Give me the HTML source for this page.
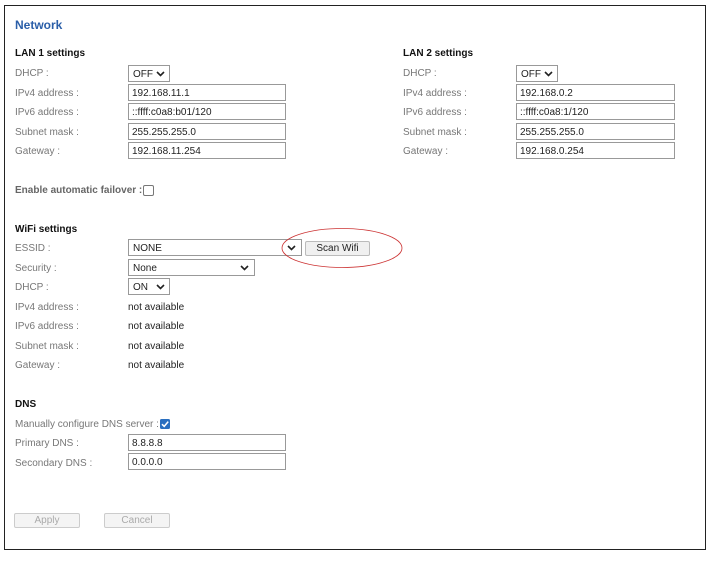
<!DOCTYPE html><html><head><style>
body{margin:0;width:710px;height:562px;background:#fff;font-family:"Liberation Sans",sans-serif;font-size:10px;color:#222;position:relative;overflow:hidden}
.a{position:absolute;white-space:nowrap}
.frame{position:absolute;left:4px;top:5px;width:700px;height:543px;border:1px solid #222}
.l{position:absolute;color:#777;line-height:12px;white-space:nowrap}
.h{position:absolute;font-weight:bold;color:#111;line-height:12px}
.in{position:absolute;border:1px solid #999;height:13px;padding-top:2px;line-height:13px;padding-left:3px;color:#222;background:#fff}
.sel{position:absolute;border:1px solid #999;height:13px;padding-top:2px;line-height:13px;padding-left:4px;background:#fff}
.chev{position:absolute;top:5px;width:9px;height:6px}
.v{position:absolute;line-height:12px;color:#222;white-space:nowrap}
.btn{position:absolute;border:1px solid #bbb;background:#f0f0f0;text-align:center;line-height:13px;border-radius:2px}
</style></head><body>
<div class="frame"></div>
<div class="a" style="left:15px;top:18px;font-weight:bold;font-size:12px;color:#2a5ea8">Network</div>
<div class="h" style="left:15px;top:48px">LAN 1 settings</div>
<div class="h" style="left:403px;top:48px">LAN 2 settings</div>
<svg width="0" height="0" style="position:absolute"><defs><symbol id="c" viewBox="0 0 9 6"><path d="M1 1L4.5 4.5L8 1" fill="none" stroke="#222" stroke-width="1.6"/></symbol></defs></svg>

<div class="l" style="left:15px;top:68px">DHCP :</div>
<div class="sel" style="left:128px;top:65px;width:36px">OFF<svg class="chev" style="left:27px"><use href="#c"/></svg></div>
<div class="l" style="left:15px;top:88px">IPv4 address :</div>
<div class="in" style="left:128px;top:84px;width:153px">192.168.11.1</div>
<div class="l" style="left:15px;top:107px">IPv6 address :</div>
<div class="in" style="left:128px;top:103px;width:153px">::ffff:c0a8:b01/120</div>
<div class="l" style="left:15px;top:127px">Subnet mask :</div>
<div class="in" style="left:128px;top:123px;width:153px">255.255.255.0</div>
<div class="l" style="left:15px;top:146px">Gateway :</div>
<div class="in" style="left:128px;top:142px;width:153px">192.168.11.254</div>

<div class="l" style="left:403px;top:68px">DHCP :</div>
<div class="sel" style="left:516px;top:65px;width:36px">OFF<svg class="chev" style="left:27px"><use href="#c"/></svg></div>
<div class="l" style="left:403px;top:88px">IPv4 address :</div>
<div class="in" style="left:516px;top:84px;width:154px">192.168.0.2</div>
<div class="l" style="left:403px;top:107px">IPv6 address :</div>
<div class="in" style="left:516px;top:103px;width:154px">::ffff:c0a8:1/120</div>
<div class="l" style="left:403px;top:127px">Subnet mask :</div>
<div class="in" style="left:516px;top:123px;width:154px">255.255.255.0</div>
<div class="l" style="left:403px;top:146px">Gateway :</div>
<div class="in" style="left:516px;top:142px;width:154px">192.168.0.254</div>

<div class="a" style="left:15px;top:185px;font-weight:bold;color:#666">Enable automatic failover :</div>
<div class="a" style="left:143px;top:185px;width:9px;height:9px;border:1px solid #777;border-radius:2px"></div>

<div class="h" style="left:15px;top:224px">WiFi settings</div>
<div class="l" style="left:15px;top:243px">ESSID :</div>
<div class="sel" style="left:128px;top:239px;width:168px">NONE<svg class="chev" style="left:158px"><use href="#c"/></svg></div>
<div class="btn" style="left:305px;top:241px;width:63px">Scan Wifi</div>
<svg class="a" style="left:280px;top:226px" width="124" height="44"><ellipse cx="62" cy="22" rx="60" ry="19.5" fill="none" stroke="#c33" stroke-width="0.8"/></svg>
<div class="l" style="left:15px;top:263px">Security :</div>
<div class="sel" style="left:128px;top:259px;width:121px">None<svg class="chev" style="left:111px"><use href="#c"/></svg></div>
<div class="l" style="left:15px;top:282px">DHCP :</div>
<div class="sel" style="left:128px;top:278px;width:36px">ON<svg class="chev" style="left:27px"><use href="#c"/></svg></div>
<div class="l" style="left:15px;top:302px">IPv4 address :</div><div class="v" style="left:128px;top:302px">not available</div>
<div class="l" style="left:15px;top:321px">IPv6 address :</div><div class="v" style="left:128px;top:321px">not available</div>
<div class="l" style="left:15px;top:341px">Subnet mask :</div><div class="v" style="left:128px;top:341px">not available</div>
<div class="l" style="left:15px;top:360px">Gateway :</div><div class="v" style="left:128px;top:360px">not available</div>

<div class="h" style="left:15px;top:399px">DNS</div>
<div class="l" style="left:15px;top:419px">Manually configure DNS server :</div>
<svg class="a" style="left:160px;top:419px" width="10" height="10"><rect width="10" height="10" rx="1.5" fill="#2a6fc0"/><path d="M2 5.2L4.2 7.4L8.2 2.6" fill="none" stroke="#fff" stroke-width="1.5"/></svg>
<div class="l" style="left:15px;top:438px">Primary DNS :</div>
<div class="in" style="left:128px;top:434px;width:153px">8.8.8.8</div>
<div class="l" style="left:15px;top:458px">Secondary DNS :</div>
<div class="in" style="left:128px;top:453px;width:153px">0.0.0.0</div>

<div class="btn" style="left:14px;top:513px;width:64px;color:#aaa;background:#f4f4f4;border-color:#ccc">Apply</div>
<div class="btn" style="left:104px;top:513px;width:64px;color:#aaa;background:#f4f4f4;border-color:#ccc">Cancel</div>
</body></html>
